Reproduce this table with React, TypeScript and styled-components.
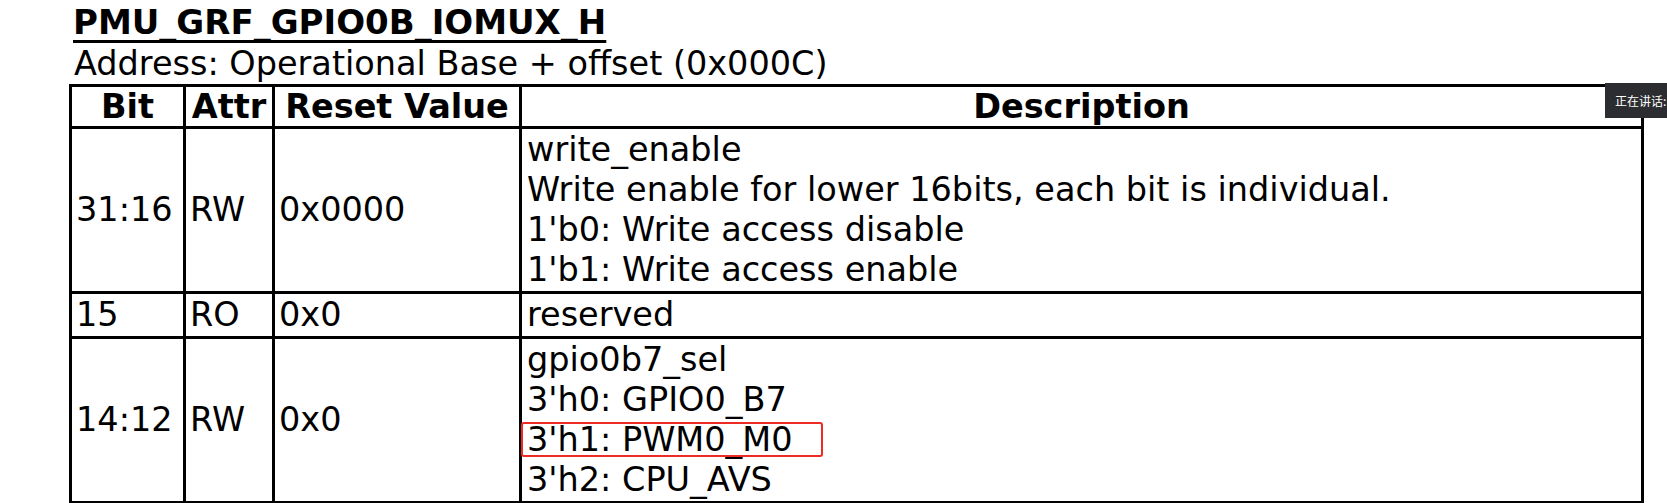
import React from 'react'
import styled, { createGlobalStyle } from 'styled-components'

const GlobalStyle = createGlobalStyle`
  html, body {
    margin: 0;
    padding: 0;
    background: #fff;
    overflow: hidden;
  }
  body {
    font-family: 'DejaVu Sans', Verdana, sans-serif;
    color: #000;
  }
`

type Row = {
  bit: string
  attr: string
  reset: string
  lines: string[]
  mark?: number
}

const rows: Row[] = [
  {
    bit: '31:16',
    attr: 'RW',
    reset: '0x0000',
    lines: [
      'write_enable',
      'Write enable for lower 16bits, each bit is individual.',
      "1'b0: Write access disable",
      "1'b1: Write access enable",
    ],
  },
  { bit: '15', attr: 'RO', reset: '0x0', lines: ['reserved'] },
  {
    bit: '14:12',
    attr: 'RW',
    reset: '0x0',
    lines: ['gpio0b7_sel', "3'h0: GPIO0_B7", "3'h1: PWM0_M0", "3'h2: CPU_AVS"],
    mark: 2,
  },
]

export default function App(): React.ReactElement {
  return (
    <Page>
      <GlobalStyle />
      <Title>PMU_GRF_GPIO0B_IOMUX_H</Title>
      <Address>Address: Operational Base + offset (0x000C)</Address>
      <RegTable>
        <colgroup>
          <col style={{ width: 114 }} />
          <col style={{ width: 89 }} />
          <col style={{ width: 247 }} />
          <col />
        </colgroup>
        <thead>
          <tr>
            <Head>Bit</Head>
            <Head>Attr</Head>
            <Head>Reset Value</Head>
            <Head>Description</Head>
          </tr>
        </thead>
        <tbody>
          {rows.map((row, i) => (
            <tr key={i}>
              <Cell>{row.bit}</Cell>
              <Cell>{row.attr}</Cell>
              <Cell>{row.reset}</Cell>
              <DescCell>
                {row.lines.map((line, j) => (
                  <Line key={j}>{row.mark === j ? <Mark>{line}</Mark> : line}</Line>
                ))}
              </DescCell>
            </tr>
          ))}
          {/* next register field, below the visible edge */}
          <tr>
            <Cell />
            <Cell />
            <Cell />
            <DescCell />
          </tr>
        </tbody>
      </RegTable>
      <Speaking>正在讲话:</Speaking>
    </Page>
  )
}

const Page = styled.div`
  position: relative;
  padding: 2px 0 0 69px;
`

const Title = styled.h1`
  margin: 0 0 0 4px;
  font-size: 34px;
  line-height: 40px;
  font-weight: bold;
  text-decoration: underline;
  text-decoration-thickness: 3px;
  text-underline-offset: 6px;
`

const Address = styled.div`
  margin: 2px 0 0 5px;
  font-size: 33.5px;
  line-height: 40px;
`

const RegTable = styled.table`
  width: 1575px;
  border-collapse: collapse;
  table-layout: fixed;
  font-size: 33.5px;
  line-height: 40px;
`

const Head = styled.th`
  border: 3px solid #000;
  padding: 0 4px;
  font-weight: bold;
  text-align: center;
  line-height: 39px;
  white-space: nowrap;
`

const Cell = styled.td`
  border: 3px solid #000;
  padding: 1px 4px;
  height: 40px;
  vertical-align: middle;
  white-space: nowrap;
`

const DescCell = styled(Cell)`
  vertical-align: top;
  padding-left: 5px;
`

const Line = styled.div`
  white-space: nowrap;
`

const Mark = styled.span`
  position: relative;

  &::after {
    content: '';
    position: absolute;
    left: -6px;
    top: 2px;
    width: 302px;
    height: 35px;
    box-sizing: border-box;
    border: 2px solid #ec2b25;
    border-radius: 3px;
  }
`

const Speaking = styled.div`
  position: absolute;
  top: 83px;
  left: 1605px;
  right: 0;
  height: 35px;
  display: flex;
  align-items: center;
  padding-left: 10px;
  background: #2b2d30;
  color: #fff;
  font-family: 'Noto Sans CJK SC', 'Noto Sans', sans-serif;
  font-size: 12px;
  white-space: nowrap;
  overflow: hidden;
`
